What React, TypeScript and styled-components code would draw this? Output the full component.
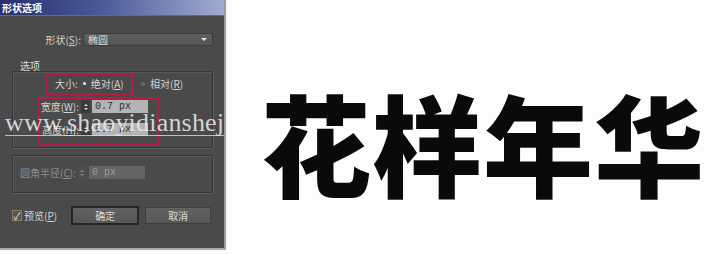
import React from "react";
import styled, { createGlobalStyle } from "styled-components";

const Global = createGlobalStyle`
  html, body { margin: 0; padding: 0; background: #fdfdfd; }
  body { font-family: "Noto Sans CJK SC", "Noto Sans", sans-serif; }
`;

const Page = styled.div`
  display: flex;
  width: 705px;
  height: 255px;
  overflow: hidden;
`;

const Dialog = styled.div`
  position: relative;
  width: 224px;
  height: 248px;
  background: #4a4a4a;
  border-right: 2px solid #9c9c9c;
  border-bottom: 2px solid #a8a8a8;
  display: flex;
  flex-direction: column;
  overflow: hidden;
  font-size: 10px;
  color: #d4d4d4;
  flex-shrink: 0;
`;

const TitleBar = styled.div`
  height: 15px;
  background: linear-gradient(to right, #26306c 0%, #4a5a98 45%, #a2acd0 100%);
  color: #fff;
  font-weight: 700;
  font-size: 10px;
  line-height: 15px;
  padding-left: 2px;
  border-bottom: 1px solid #6a6a6a;
`;

const Body = styled.div`
  display: flex;
  flex-direction: column;
  padding: 0 11px 0 12px;
`;

const ShapeRow = styled.div`
  display: flex;
  align-items: center;
  margin-top: 17px;
  height: 13px;
`;

const Label = styled.span<{ $w?: number; $dim?: boolean }>`
  display: inline-block;
  width: ${(p) => (p.$w ? `${p.$w}px` : "auto")};
  text-align: right;
  white-space: nowrap;
  color: ${(p) => (p.$dim ? "#8e8e8e" : "#d4d4d4")};
  line-height: 13px;
`;

const Select = styled.div`
  margin-left: 2px;
  flex: 1;
  height: 13px;
  background: linear-gradient(#5e5e5e, #555);
  border: 1px solid #3c3c3c;
  box-sizing: border-box;
  display: flex;
  align-items: center;
  justify-content: space-between;
  padding: 0 5px 0 4px;
  color: #dcdcdc;
  line-height: 11px;
`;

const Arrow = styled.span`
  width: 0;
  height: 0;
  border-left: 3px solid transparent;
  border-right: 3px solid transparent;
  border-top: 3px solid #e8e8e8;
`;

const GroupTitle = styled.div`
  margin-top: 15px;
  padding-left: 8px;
  height: 10px;
  line-height: 10px;
  color: #dcdcdc;
`;

const Group = styled.div<{ $h: number; $mt: number }>`
  margin-top: ${(p) => p.$mt}px;
  height: ${(p) => p.$h}px;
  border: 1px solid #363636;
  box-shadow: 1px 1px 0 #5c5c5c, inset 1px 1px 0 #585858;
  box-sizing: border-box;
  display: flex;
  flex-direction: column;
`;

const RedBox = styled.div<{ $ml: number; $mt: number; $w: number; $h: number }>`
  margin-left: ${(p) => p.$ml}px;
  margin-top: ${(p) => p.$mt}px;
  width: ${(p) => p.$w}px;
  height: ${(p) => p.$h}px;
  border: 2px solid #b01e44;
  box-sizing: border-box;
  display: flex;
  flex-direction: column;
`;

const SizeRow = styled.div`
  display: flex;
  align-items: center;
  height: 17px;
  padding-left: 8px;
  gap: 3px;
`;

const RadioDot = styled.span<{ $on?: boolean }>`
  width: ${(p) => (p.$on ? 3 : 4)}px;
  height: ${(p) => (p.$on ? 3 : 4)}px;
  border-radius: 50%;
  background: ${(p) => (p.$on ? "#f0f0f0" : "#6a6a6a")};
  margin: 0 2px;
`;

const Outside = styled.div`
  display: flex;
  align-items: center;
  gap: 3px;
  margin-left: 6px;
`;

const SizeLine = styled.div`
  display: flex;
  align-items: center;
`;

const FieldRow = styled.div<{ $mt: number; $pl: number }>`
  display: flex;
  align-items: center;
  margin-top: ${(p) => p.$mt}px;
  padding-left: ${(p) => p.$pl}px;
  height: 13px;
`;

const Spinner = styled.span<{ $dim?: boolean }>`
  width: 9px;
  height: 13px;
  margin: 0 2px;
  background: ${(p) => (p.$dim ? "#4e4e4e" : "#3a3a3a")};
  display: flex;
  flex-direction: column;
  align-items: center;
  justify-content: center;
  gap: 2px;
  &::before, &::after {
    content: "";
    width: 0;
    height: 0;
    border-left: 2px solid transparent;
    border-right: 2px solid transparent;
  }
  &::before { border-bottom: 2px solid ${(p) => (p.$dim ? "#8a8a8a" : "#dcdcdc")}; }
  &::after { border-top: 2px solid ${(p) => (p.$dim ? "#8a8a8a" : "#dcdcdc")}; }
`;

const Input = styled.span<{ $dim?: boolean }>`
  width: 56px;
  height: 13px;
  box-sizing: border-box;
  background: ${(p) => (p.$dim ? "#646464" : "#b4b4b4")};
  color: ${(p) => (p.$dim ? "#9a9a9a" : "#2e2e2e")};
  font-family: "Liberation Mono", monospace;
  font-size: 10px;
  line-height: 13px;
  padding-left: 3px;
  white-space: pre;
`;

const Footer = styled.div`
  display: flex;
  align-items: center;
  margin-top: 13px;
  height: 19px;
`;

const Check = styled.span`
  width: 10px;
  height: 11px;
  box-sizing: border-box;
  border: 1px solid #8a7a5a;
  background: #555;
  color: #f2f2f2;
  font-size: 10px;
  line-height: 9px;
  text-align: center;
  margin-right: 2px;
`;

const Button = styled.div<{ $focus?: boolean; $w: number; $ml: number }>`
  width: ${(p) => p.$w}px;
  margin-left: ${(p) => p.$ml}px;
  height: ${(p) => (p.$focus ? 19 : 17)}px;
  box-sizing: border-box;
  border: ${(p) => (p.$focus ? "2px solid #262626" : "1px solid #3e3e3e")};
  background: linear-gradient(#626262, #565656);
  color: #dedede;
  display: flex;
  align-items: center;
  justify-content: center;
  line-height: 13px;
`;

const Watermark = styled.div`
  position: absolute;
  left: 5px;
  top: 110px;
  font-family: "Liberation Serif", serif;
  font-size: 26px;
  line-height: 25px;
  letter-spacing: 0.2px;
  color: rgba(232, 232, 232, 0.88);
  white-space: nowrap;
  border-bottom: 1px solid rgba(220, 220, 220, 0.8);
  pointer-events: none;
`;

const Canvas = styled.div`
  flex: 1;
  display: flex;
  align-items: flex-start;
  padding: 85px 0 0 35px;
  background: #fdfdfd;
  overflow: hidden;
`;

const BigText = styled.div`
  font-family: "Noto Sans CJK SC", sans-serif;
  font-weight: 900;
  font-size: 110px;
  line-height: 112px;
  letter-spacing: 1px;
  color: #0a0a0a;
  white-space: nowrap;
`;

export default function App() {
  return (
    <>
      <Global />
      <Page>
        <Dialog>
          <TitleBar>形状选项</TitleBar>
          <Body>
            <ShapeRow>
              <Label $w={69}>形状(<u>S</u>):</Label>
              <Select>
                <span>椭圆</span>
                <Arrow />
              </Select>
            </ShapeRow>
            <GroupTitle>选项</GroupTitle>
            <Group $mt={0} $h={77}>
              <SizeLine>
                <RedBox $ml={32} $mt={1} $w={88} $h={22}>
                  <SizeRow>
                    <Label>大小:</Label>
                    <RadioDot $on />
                    <Label>绝对(<u>A</u>)</Label>
                  </SizeRow>
                </RedBox>
                <Outside>
                  <RadioDot />
                  <Label>相对(<u>R</u>)</Label>
                </Outside>
              </SizeLine>
              <RedBox $ml={25} $mt={2} $w={121} $h={49}>
                <FieldRow $mt={1} $pl={0}>
                  <Label $w={39}>宽度(<u>W</u>):</Label>
                  <Spinner />
                  <Input>0.7 px</Input>
                </FieldRow>
                <FieldRow $mt={10} $pl={0}>
                  <Label $w={39}>高度(<u>H</u>):</Label>
                  <Spinner />
                  <Input>0.7 px</Input>
                </FieldRow>
              </RedBox>
            </Group>
            <Group $mt={7} $h={38}>
              <FieldRow $mt={10} $pl={7}>
                <Label $dim>圆角半径(<u>C</u>):</Label>
                <Spinner $dim />
                <Input $dim>0 px</Input>
              </FieldRow>
            </Group>
            <Footer>
              <Check>✓</Check>
              <Label>预览(<u>P</u>)</Label>
              <Button $focus $w={68} $ml={14}>确定</Button>
              <Button $w={66} $ml={6}>取消</Button>
            </Footer>
          </Body>
          <Watermark>www.shaoyidiansheji.com</Watermark>
        </Dialog>
        <Canvas>
          <BigText>花样年华</BigText>
        </Canvas>
      </Page>
    </>
  );
}
